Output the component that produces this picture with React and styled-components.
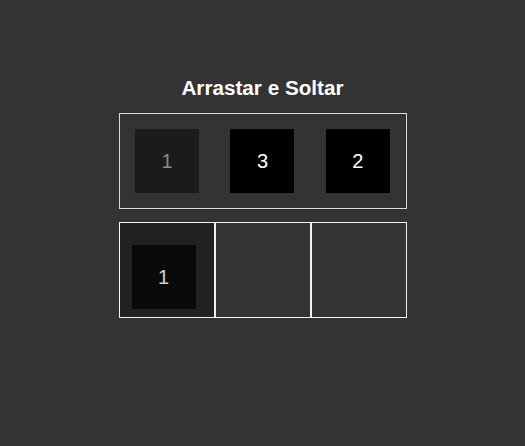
import React from 'react'
import styled, { createGlobalStyle } from 'styled-components'

const GlobalStyle = createGlobalStyle`
  html, body {
    margin: 0;
    padding: 0;
    background: #333333;
    font-family: "Liberation Sans", Arial, sans-serif;
  }
`

const Page = styled.div`
  display: flex;
  flex-direction: column;
  align-items: center;
  padding-top: 76px;
  min-height: 446px;
  box-sizing: border-box;
`

const Title = styled.h2`
  margin: 0 0 14px;
  color: #ffffff;
  font-size: 20.7px;
  font-weight: bold;
  line-height: 23px;
`

const Pool = styled.div`
  width: 288px;
  height: 96px;
  box-sizing: border-box;
  border: 1px solid #dcdcdc;
  display: flex;
  justify-content: space-around;
  align-items: center;
`

const Tile = styled.div`
  width: 64px;
  height: 64px;
  flex-shrink: 0;
  display: flex;
  align-items: center;
  justify-content: center;
  font-size: 20px;
  background: ${p => (p.$ghost ? '#1b1b1b' : p.$placed ? '#0a0a0a' : '#000000')};
  color: ${p => (p.$ghost ? '#8a8a8a' : p.$placed ? '#d0d0d0' : '#ffffff')};
`

const Slots = styled.div`
  display: flex;
  margin-top: 13px;
`

const Slot = styled.div`
  width: 96px;
  height: 96px;
  box-sizing: border-box;
  border: 1px solid #f2f2f2;
  background: ${p => (p.$filled ? '#222222' : 'transparent')};
  padding: 22px 0 0 12px;
`

export default function App() {
  const pool = [
    { id: 1, ghost: true },
    { id: 3 },
    { id: 2 }
  ]
  const slots = [1, null, null]

  return (
    <>
      <GlobalStyle />
      <Page>
        <Title>Arrastar e Soltar</Title>
        <Pool>
          {pool.map(t => (
            <Tile key={t.id} $ghost={t.ghost}>
              {t.id}
            </Tile>
          ))}
        </Pool>
        <Slots>
          {slots.map((s, i) => (
            <Slot key={i} $filled={s !== null}>
              {s !== null && <Tile $placed>{s}</Tile>}
            </Slot>
          ))}
        </Slots>
      </Page>
    </>
  )
}
